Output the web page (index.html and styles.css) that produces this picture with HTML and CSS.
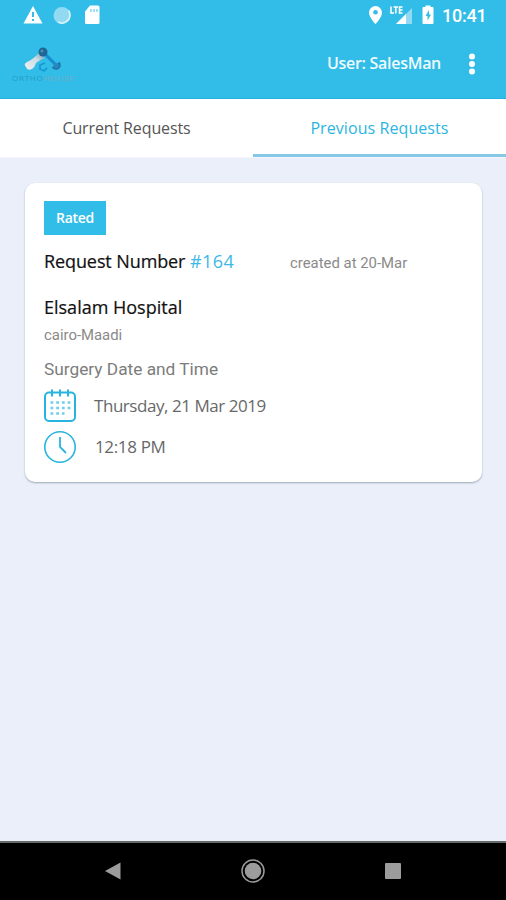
FILE: index.html
```html
<!DOCTYPE html>
<html lang="en">
<head>
<meta charset="utf-8">
<title>Previous Requests</title>
<link rel="stylesheet" href="styles.css">
</head>
<body>
<header class="top">
  <div class="status">
    <svg class="status-left" width="82" height="24" viewBox="0 0 82 24">
      <path d="M10 2 19.500 19.500H.5Z" fill="#fff"/><path d="M10 8v5m0 2v2" stroke="#31bde8" stroke-width="2"/>
      <circle cx="39" cy="11.500" r="8.500" fill="#91daf2"/><path d="M45.500 6.500a8 8 0 0 1-10.500 11.500" fill="none" stroke="#d7f2fb" stroke-width="1.800"/>
      <path d="M67 1.500h8q1.500 0 1.500 1.500v15.500q0 1.500-1.500 1.500H63.500Q62 20 62 18.500V7.500Z" fill="#fff"/><path d="M68 5v3m3-3v3m3-3v3" stroke="#63cdec" stroke-width="1.200"/>
    </svg>
    <svg class="status-right" width="68" height="24" viewBox="0 0 68 24">
      <path d="M8.500 2a6.500 6.500 0 0 1 6.500 6.500C15 13.500 8.500 20 8.500 20S2 13.500 2 8.500A6.500 6.500 0 0 1 8.500 2Z" fill="#fff"/><circle cx="8.500" cy="8.300" r="2.300" fill="#31bde8"/>
      <path d="M45 4v16H29Z" fill="#91daf2"/><path d="M39 10v10H29Z" fill="#fff"/>
      <path d="M24 2.500V9h3M26.500 3h4.500M28.800 3v6.500M35.500 3h-3v6h3m-3-3h3" fill="none" stroke="#fff" stroke-width="1.500"/>
      <path d="M58.500 3V1.500h5V3h2q1 0 1 1v15q0 1-1 1h-9q-1 0-1-1V4q0-1 1-1Z" fill="#fff"/><path d="m62 6-3.500 6h2v4.500l3.500-6h-2Z" fill="#31bde8"/>
    </svg>
    <span class="clock">10:41</span>
  </div>
  <div class="appbar">
    <div class="brand">
      <svg width="40" height="27" viewBox="0 0 40 27">
        <defs><linearGradient id="bone" x1="1" y1="0" x2="0" y2="1"><stop stop-color="#668da8"/><stop offset=".4" stop-color="#c9dce3"/><stop offset="1" stop-color="#f1f1ef"/></linearGradient></defs>
        <path d="M15.500 5Q10 12 3 15-1 17 2 20q1 4 6 2 3-2 4-6 3-3 9-5Z" fill="url(#bone)"/>
        <path d="m20 6 13 13" stroke="#168bd0" stroke-width="3"/>
        <circle cx="19" cy="5" r="4.500" fill="#1d6695"/><circle cx="18" cy="4" r="1.500" fill="#558fae"/>
        <path d="M34.500 15.500q2 4-1 5.500-3 1-4.500-1.500" fill="none" stroke="#2377ad" stroke-width="3"/><circle cx="32" cy="18.500" r="2.500" fill="#2789c3"/>
        <path d="m21 16-5 2 0 4 4 2 3-3" fill="none" stroke="#1799d5" stroke-width="1.800"/>
      </svg>
      <span class="brand-name">ORTHO<span>HOUSE</span></span>
    </div>
    <span class="user">User: SalesMan</span>
    <svg class="more" width="8" height="22" viewBox="0 0 8 22" fill="#fff"><circle cx="4" cy="3.500" r="3"/><circle cx="4" cy="11" r="3"/><circle cx="4" cy="18.500" r="3"/></svg>
  </div>
</header>
<nav class="tabs">
  <div class="tab"><span class="current">Current Requests</span></div>
  <div class="tab active"><span class="previous">Previous Requests</span></div>
</nav>
<main>
  <article class="card">
    <div class="badge"><span>Rated</span></div>
    <div class="request"><h1>Request Number <b>#164</b></h1><span class="created">created at 20-Mar</span></div>
    <h2>Elsalam Hospital</h2>
    <p class="place">cairo-Maadi</p>
    <p class="surgery">Surgery Date and Time</p>
    <div class="row">
      <svg width="32" height="34" viewBox="0 0 32 34" fill="none" stroke="#27b4de">
        <rect x="1" y="3.500" width="30" height="28.500" rx="4" stroke-width="2"/><path d="M8 .5v7M16 .5v7M24 .5v7" stroke-width="2"/>
        <path d="M6.500 13.500h20M6.500 19h20M6.500 24.500h14" stroke-width="2.500" stroke-dasharray="2.800 2.900" opacity=".65"/>
      </svg>
      <span class="date">Thursday, 21 Mar 2019</span>
    </div>
    <div class="row time-row">
      <svg width="32" height="34" viewBox="0 0 32 34" fill="none" stroke="#27b4de"><circle cx="16" cy="17" r="15.200" stroke-width="1.600"/><path d="M16 7v10l6 6" stroke-width="1.800"/></svg>
      <span class="time">12:18 PM</span>
    </div>
  </article>
</main>
<footer>
  <svg width="16" height="18" viewBox="0 0 16 18"><path d="M15.500.5v17L0 9Z" fill="#9c9c9c"/></svg>
  <svg width="24" height="24" viewBox="0 0 24 24"><circle cx="12" cy="12" r="11" fill="none" stroke="#999" stroke-width="1.500"/><circle cx="12" cy="12" r="8.300" fill="#9c9c9c"/></svg>
  <svg width="16" height="16" viewBox="0 0 16 16"><rect width="16" height="16" rx="1" fill="#9c9c9c"/></svg>
</footer>
</body>
</html>
```
FILE: styles.css
```css
* { box-sizing: border-box; }
body { margin: 0; height: 900px; display: flex; flex-direction: column; background: #eaeffa; font-family: "Open Sans", sans-serif; overflow: hidden; }
svg { display: block; flex: none; }
h1, h2, p { margin: 0; font-weight: 400; }
span, h1, h2, p { white-space: nowrap; }
.top { height: 99px; background: #31bde8; border-bottom: 1px solid #25b1de; }
.status { height: 32px; padding: 4px 19px 0 23px; display: flex; }
.status-right { margin-left: auto; }
.clock { width: 45px; margin-left: 7px; font: 500 18px/24px Roboto, sans-serif; color: #fff; letter-spacing: -.25px; }
.appbar { height: 66px; padding: 0 30px 0 12px; display: flex; }
.brand { width: 66px; padding: 15px 0 0 12px; }
.brand-name { display: block; margin: -1px 0 0 -12px; font: 8px/10px "Open Sans", sans-serif; letter-spacing: .75px; color: #269bc4; }
.brand-name span { color: #7ca9bd; }
.user { margin: 20px 0 0 auto; font-size: 16px; line-height: 22px; font-weight: 600; letter-spacing: -.29px; color: #effbff; }
.more { margin: 21px 0 0 27px; }
.tabs { height: 59px; display: grid; grid-template-columns: 1fr 1fr; background: #fff; border-bottom: 1px solid #f3f6fc; }
.tab { display: flex; justify-content: center; padding-top: 18px; font-size: 16px; line-height: 22px; color: #555; }
.current { letter-spacing: -.12px; }
.previous { letter-spacing: .08px; }
.active { color: #2bb6df; border-bottom: 3px solid #86c8e5; }
main { flex: 1; padding: 25px 24px 0 25px; }
.card { height: 299px; padding: 18px 19px 0; background: #fff; border-radius: 10px; box-shadow: 0 1px 2px #9baab5; }
.badge { width: 62px; height: 34px; background: #31bde8; color: #fff; font-size: 14px; font-weight: 600; line-height: 34px; letter-spacing: -.3px; text-align: center; }
.request { display: flex; height: 56px; padding-top: 13px; }
h1 { width: 246px; font-size: 18px; line-height: 26px; color: #111; -webkit-text-stroke: .2px; letter-spacing: -.1px; }
h1 b { font-weight: 400; color: #3db8e7; letter-spacing: .4px; -webkit-text-stroke: 0; }
.created { font: 14.900px/30px Roboto, sans-serif; color: #8a8a8a; }
h2 { font-size: 18px; line-height: 32px; color: #111; -webkit-text-stroke: .2px; }
.place { font: 14.900px/24px Roboto, sans-serif; color: #8a8a8a; }
.surgery { margin-top: 8px; font: 17.300px/28px Roboto, sans-serif; color: #7c7c7c; }
.row { height: 34px; margin-top: 6px; display: flex; gap: 18px; font-size: 17px; line-height: 33px; color: #686868; }
.date { letter-spacing: -.45px; }
.time { letter-spacing: -.35px; }
.time-row { margin-top: 7px; gap: 19px; line-height: 34px; }
footer { height: 59px; background: #000; border-top: 2px solid #666b6b; padding: 0 105px 2px; display: flex; align-items: center; justify-content: space-between; }
```
